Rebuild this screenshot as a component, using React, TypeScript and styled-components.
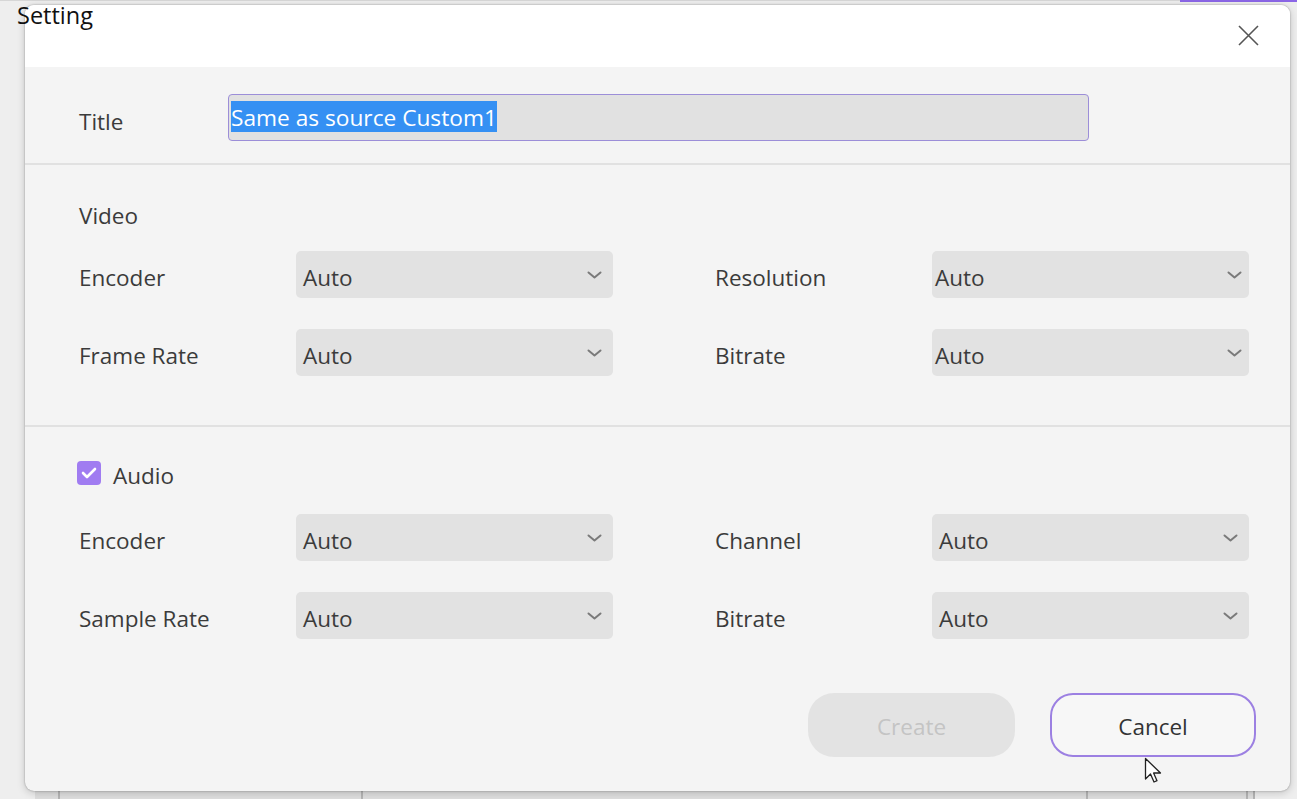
import React from "react";
import styled, { createGlobalStyle } from "styled-components";

const GlobalStyle = createGlobalStyle`
  html, body { margin: 0; padding: 0; background: #ededed; }
  body { font-family: "Open Sans", "Noto Sans", "Liberation Sans", sans-serif; }
  * { box-sizing: border-box; }
`;

const Page = styled.div`
  position: relative;
  width: 1297px;
  height: 799px;
  overflow: hidden;
  display: flex;
  flex-direction: column;
  background: #eeeeee;
`;

const TopStrip = styled.div`
  height: 5px;
  display: flex;
  flex-shrink: 0;
  border-top: 1px solid #d6d6d6;
`;

const AccentBar = styled.div`
  margin-left: 1180px;
  width: 117px;
  height: 2px;
  margin-top: -1px;
  background: #8b66e6;
`;

const WindowTitle = styled.div`
  position: absolute;
  left: 17px;
  top: -3px;
  font-size: 23.5px;
  line-height: 36px;
  color: #111;
  z-index: 3;
`;

const Dialog = styled.div`
  margin-left: 25px;
  width: 1265px;
  height: 786px;
  flex-shrink: 0;
  border-radius: 9px;
  background: #f4f4f4;
  box-shadow: 0 0 2px rgba(0, 0, 0, 0.35), 0 2px 8px rgba(0, 0, 0, 0.18);
  overflow: hidden;
  display: flex;
  flex-direction: column;
  position: relative;
  z-index: 1;
`;

const Header = styled.div`
  height: 62px;
  background: #ffffff;
  display: flex;
  justify-content: flex-end;
  align-items: flex-start;
  padding: 20px 31px 0 0;
`;

const CloseButton = styled.button`
  width: 21px;
  height: 21px;
  padding: 0;
  border: none;
  background: transparent;
  display: flex;
  cursor: pointer;
`;

const TitleSection = styled.div`
  height: 96px;
  display: flex;
  align-items: flex-start;
  padding: 27px 0 0 54px;
`;

const TitleLabel = styled.div`
  width: 149px;
  font-size: 22.5px;
  line-height: 47px;
  padding-top: 4px;
  color: #3b3b3b;
`;

const TitleInput = styled.div`
  width: 861px;
  height: 47px;
  border: 1px solid #9c8ed8;
  border-radius: 4px;
  background: #e1e1e1;
  display: flex;
  align-items: center;
  padding-left: 2px;
`;

const Selected = styled.span`
  background: #3590f3;
  color: #ffffff;
  font-size: 22.7px;
  line-height: 31px;
  height: 31px;
  padding-top: 1px;
  white-space: nowrap;
  margin-top: -2px;
`;

const Divider = styled.div`
  height: 2px;
  flex-shrink: 0;
  background: #e1e1e1;
`;

const Section = styled.div<{ $pt: number; $pb: number; $gap: number }>`
  display: flex;
  flex-direction: column;
  padding: ${(p) => p.$pt}px 0 ${(p) => p.$pb}px 54px;
  gap: ${(p) => p.$gap}px;
`;

const SectionHead = styled.div`
  display: flex;
  align-items: center;
  gap: 12px;
  height: 30px;
  font-size: 22.5px;
  color: #3b3b3b;
`;

const HeadText = styled.span`
  padding-top: 4px;
`;

const CheckBox = styled.span`
  width: 24px;
  height: 24px;
  border-radius: 4px;
  background: #a07cf1;
  display: flex;
  align-items: center;
  justify-content: center;
  margin-left: -2px;
`;

const FieldGrid = styled.div`
  display: grid;
  grid-template-columns: 217px 317px 102px 217px 317px;
  grid-auto-rows: 47px;
  row-gap: 31px;
  align-items: center;
`;

const FieldLabel = styled.div<{ $col: number }>`
  grid-column: ${(p) => p.$col};
  font-size: 22.5px;
  color: #3b3b3b;
  padding-top: 5px;
  white-space: nowrap;
`;

const Select = styled.div<{ $col: number; $inset: number }>`
  grid-column: ${(p) => p.$col};
  height: 47px;
  border-radius: 5px;
  background: #e2e2e2;
  display: flex;
  align-items: center;
  justify-content: space-between;
  padding: 0 ${(p) => p.$inset + 4}px 0 ${(p) => p.$inset}px;
  font-size: 22.5px;
  color: #3b3b3b;
`;

const SelectValue = styled.span`
  padding-top: 5px;
`;

const Chevron = styled.svg`
  width: 15px;
  height: 8px;
`;

const Footer = styled.div`
  display: flex;
  justify-content: flex-end;
  gap: 35px;
  padding: 54px 34px 0 0;
`;

const ActionButton = styled.button<{ $primary?: boolean }>`
  width: ${(p) => (p.$primary ? 207 : 206)}px;
  height: 64px;
  border-radius: ${(p) => (p.$primary ? 26 : 23)}px;
  font-family: inherit;
  font-size: 22.5px;
  padding: 2px 0 0;
  border: ${(p) => (p.$primary ? "none" : "2px solid #9c80e2")};
  background: ${(p) => (p.$primary ? "#e3e3e3" : "#f7f7f7")};
  color: ${(p) => (p.$primary ? "#c4c4c4" : "#333333")};
`;

const BottomStrip = styled.div`
  height: 8px;
  margin-left: 35px;
  width: 1220px;
  display: grid;
  grid-template-columns: 25px 303px 725px 160px 7px;
  background: #dedede;
`;

const StripCell = styled.div`
  border-right: 2px solid #b5b5b5;
`;

const Pointer = styled.svg`
  position: absolute;
  left: 1144px;
  top: 757px;
  width: 22px;
  height: 30px;
  z-index: 4;
`;

type Field = { label: string };

const videoRows: [Field, Field][] = [
  [{ label: "Encoder" }, { label: "Resolution" }],
  [{ label: "Frame Rate" }, { label: "Bitrate" }],
];

const audioRows: [Field, Field][] = [
  [{ label: "Encoder" }, { label: "Channel" }],
  [{ label: "Sample Rate" }, { label: "Bitrate" }],
];

const ChevronIcon = () => (
  <Chevron viewBox="0 0 15 8">
    <polyline points="1.5,1.5 7.5,6.5 13.5,1.5" fill="none" stroke="#7a7a7a" strokeWidth="2" strokeLinecap="round" strokeLinejoin="round" />
  </Chevron>
);

const Fields = ({ rows, rightInset }: { rows: [Field, Field][]; rightInset: number }) => (
  <FieldGrid>
    {rows.map(([l, r]) => (
      <React.Fragment key={l.label + r.label}>
        <FieldLabel $col={1}>{l.label}</FieldLabel>
        <Select $col={2} $inset={7}>
          <SelectValue>Auto</SelectValue>
          <ChevronIcon />
        </Select>
        <FieldLabel $col={4}>{r.label}</FieldLabel>
        <Select $col={5} $inset={rightInset}>
          <SelectValue>Auto</SelectValue>
          <ChevronIcon />
        </Select>
      </React.Fragment>
    ))}
  </FieldGrid>
);

export default function App() {
  return (
    <>
      <GlobalStyle />
      <Page>
        <WindowTitle>Setting</WindowTitle>
        <TopStrip>
          <AccentBar />
        </TopStrip>
        <Dialog>
          <Header>
            <CloseButton aria-label="Close">
              <svg width="21" height="21" viewBox="0 0 21 21">
                <path d="M1 1 L20 20 M20 1 L1 20" stroke="#555" strokeWidth="1.6" fill="none" />
              </svg>
            </CloseButton>
          </Header>
          <TitleSection>
            <TitleLabel>Title</TitleLabel>
            <TitleInput>
              <Selected>Same as source Custom1</Selected>
            </TitleInput>
          </TitleSection>
          <Divider />
          <Section $pt={33} $pb={49} $gap={23}>
            <SectionHead>
              <HeadText>Video</HeadText>
            </SectionHead>
            <Fields rows={videoRows} rightInset={3} />
          </Section>
          <Divider />
          <Section $pt={31} $pb={0} $gap={26}>
            <SectionHead>
              <CheckBox>
                <svg width="16" height="12" viewBox="0 0 16 12">
                  <polyline points="2,6 6,10 14,2" fill="none" stroke="#fff" strokeWidth="2.6" strokeLinecap="round" strokeLinejoin="round" />
                </svg>
              </CheckBox>
              <HeadText>Audio</HeadText>
            </SectionHead>
            <Fields rows={audioRows} rightInset={7} />
          </Section>
          <Footer>
            <ActionButton $primary disabled>Create</ActionButton>
            <ActionButton>Cancel</ActionButton>
          </Footer>
        </Dialog>
        <BottomStrip>
          <StripCell />
          <StripCell />
          <StripCell />
          <StripCell />
          <StripCell />
        </BottomStrip>
        <Pointer viewBox="0 0 22 30">
          <path d="M1.5 1.5 L1.5 22 L6.5 17 L10 25 L13 23.7 L9.6 16 L16.5 16 Z" fill="#fff" stroke="#222" strokeWidth="1.3" strokeLinejoin="round" />
        </Pointer>
      </Page>
    </>
  );
}
